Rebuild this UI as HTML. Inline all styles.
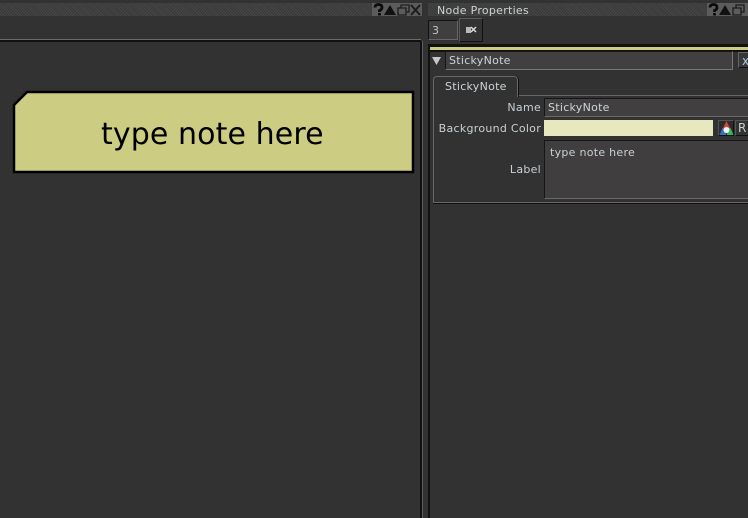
<!DOCTYPE html>
<html><head><meta charset="utf-8">
<style>
html,body{margin:0;padding:0;background:#323232;}
#r{position:relative;width:748px;height:518px;overflow:hidden;background:#323232;font-family:"DejaVu Sans",sans-serif;font-size:11px;letter-spacing:.28px;color:#c8c8c8;}
#r div{position:absolute;box-sizing:border-box;}
#r span{position:absolute;white-space:nowrap;line-height:14px;}
.dith{background-color:#3f3f3f;background-image:repeating-linear-gradient(45deg,#383838 0 1px,#474747 1px 2px);}
.inp{background:#403e3e;border:1px solid #1a1a1a;border-right-color:#6a6a6a;border-bottom-color:#6a6a6a;}
svg{position:absolute;}
</style></head><body><div id="r">

<!-- title bars -->
<div class="dith" style="left:0;top:3px;width:372px;height:13px"></div>
<div class="dith" style="left:428px;top:3px;width:280px;height:13px"></div>
<span style="left:437px;top:4px;color:#ccd2d4;">Node Properties</span>

<!-- window buttons left -->
<svg style="left:372px;top:3px" width="50" height="13" viewBox="0 0 50 13">
<rect width="50" height="13" fill="#5c5c5c"/>
<path d="M3 4.500 Q3 1.500 6.500 1.500 Q10 1.500 10 4.500 Q10 6.500 7.500 7.500 L7.500 9 M7.500 10 L7.500 12.500" fill="none" stroke="#0c0c0c" stroke-width="2.800"/>
<path d="M12 12 L18 2 L24 12 Z" fill="#111"/>
<path d="M26 5 H34 V12 H26 Z M29 5 V2 H37 V9 H34" fill="none" stroke="#1c1c1c" stroke-width="1.300"/>
<path d="M39 2 L48 12 M48 2 L39 12" fill="none" stroke="#1c1c1c" stroke-width="2"/>
</svg>
<!-- window buttons right -->
<svg style="left:707px;top:3px" width="41" height="13" viewBox="0 0 41 13">
<rect width="41" height="13" fill="#5c5c5c"/>
<path d="M3 4.500 Q3 1.500 6.500 1.500 Q10 1.500 10 4.500 Q10 6.500 7.500 7.500 L7.500 9 M7.500 10 L7.500 12.500" fill="none" stroke="#0c0c0c" stroke-width="2.800"/>
<path d="M12 12 L18 2 L24 12 Z" fill="#111"/>
<path d="M26 5 H34 V12 H26 Z M29 5 V2 H37 V9 H34" fill="none" stroke="#1c1c1c" stroke-width="1.300"/>
</svg>

<!-- left panel frame -->
<div style="left:0;top:39px;width:421px;height:1px;background:#6b6b6b"></div>
<div style="left:0;top:40px;width:421px;height:2px;background:#111"></div>
<div style="left:420px;top:41px;width:2px;height:477px;background:#111"></div>
<div style="left:422px;top:41px;width:1px;height:477px;background:#5e5e5e"></div>

<!-- sticky note -->
<svg style="left:12px;top:90px" width="404" height="84" viewBox="0 0 404 84">
<path d="M15 2 H401 V82 H2 V15 Z" fill="#cccc82" stroke="#000" stroke-width="2.500"/>
</svg>
<span id="note" style="left:101px;top:117px;font-size:30px;letter-spacing:.1px;line-height:36px;color:#000;">type note here</span>

<!-- right panel top controls -->
<div class="inp" style="left:428px;top:20px;width:30px;height:20px;border-color:#111 #666 #666 #111"></div>
<span style="left:432px;top:24px;color:#b9c6c9;">3</span>
<div style="left:459px;top:18px;width:24px;height:24px;background:#333;border:1px solid #111;border-top-color:#5a5a5a;border-left-color:#5a5a5a"></div>
<svg style="left:466px;top:26px" width="11" height="8" viewBox="0 0 11 8">
<path d="M0 1 H5 V7 H0 Z" fill="#b8b8b8"/><path d="M5 1 L10 6 M10 1 L5 6" stroke="#d8d8d8" stroke-width="1.500"/>
</svg>

<!-- properties panel -->
<div style="left:428px;top:44px;width:320px;height:3px;background:#111"></div>
<div style="left:430px;top:47px;width:318px;height:3px;background:#cccc82"></div>
<div style="left:428px;top:50px;width:320px;height:2px;background:#111"></div>
<div style="left:428px;top:44px;width:2px;height:474px;background:#111"></div>

<svg style="left:432px;top:57px" width="9" height="8" viewBox="0 0 9 8"><path d="M0 0 H9 L4.500 8 Z" fill="#c8c8c8"/></svg>
<div style="left:445px;top:51px;width:288px;height:19px;border:1px solid #161616;border-right-color:#777;border-bottom-color:#777;background:#413f3f"></div>
<span style="left:449px;top:54px;color:#ccd4d8;">StickyNote</span>
<div style="left:738px;top:52px;width:12px;height:16px;background:#383838;border:1px solid #111;border-top-color:#666;border-left-color:#666"></div>
<span style="left:742px;top:54px;color:#a9cbe6;font-size:12px;">x</span>

<!-- tab box -->
<div style="left:433px;top:95px;width:318px;height:108px;border:1px solid #666;box-shadow:0 1px 0 #111"></div>
<div style="left:433px;top:76px;width:85px;height:21px;background:#323232;border:1px solid #666;border-bottom:none;border-radius:4px 4px 0 0;box-shadow:1px 0 0 #111"></div>
<span style="left:445px;top:80px;color:#ccd4d8;">StickyNote</span>

<!-- rows -->
<span style="right:207px;top:101px;color:#c8d0d4;">Name</span>
<div style="left:544px;top:98px;width:206px;height:19px;background:#413f3f;border:1px solid #161616;border-bottom-color:#6a6a6a"></div>
<span style="left:548px;top:101px;color:#ccd4d8;">StickyNote</span>

<span style="right:207px;top:122px;color:#c8d0d4;">Background Color</span>
<div style="left:544px;top:120px;width:169px;height:16px;background:#e8e8be"></div>
<div style="left:718px;top:120px;width:16px;height:16px;background:#2c2c2c;border:1px solid #111;border-top-color:#555;border-left-color:#555"></div>
<svg style="left:719px;top:121px" width="15" height="15" viewBox="0 0 15 15">
<path d="M7.500 0 L11.500 8 H3.500 Z" fill="#c8493f"/><path d="M3.500 7 L7.500 8 L7 14 H0.500 Z" fill="#3c6fc4"/><path d="M11.500 7 L14.500 14 H8 L7.500 8 Z" fill="#2fb45a"/><circle cx="7.500" cy="9" r="3" fill="#f4f4f4"/>
</svg>
<div style="left:735px;top:120px;width:15px;height:16px;background:#333;border:1px solid #111;border-top-color:#555;border-left-color:#555"></div>
<span style="left:738px;top:121px;color:#c8d0d4;font-size:12px;">R</span>

<span style="right:207px;top:163px;color:#c8d0d4;">Label</span>
<div style="left:544px;top:140px;width:206px;height:59px;background:#403e3e;border:1px solid #161616;border-bottom-color:#6a6a6a"></div>
<span style="left:550px;top:146px;color:#c8d0d4;">type note here</span>

</div></body></html>
